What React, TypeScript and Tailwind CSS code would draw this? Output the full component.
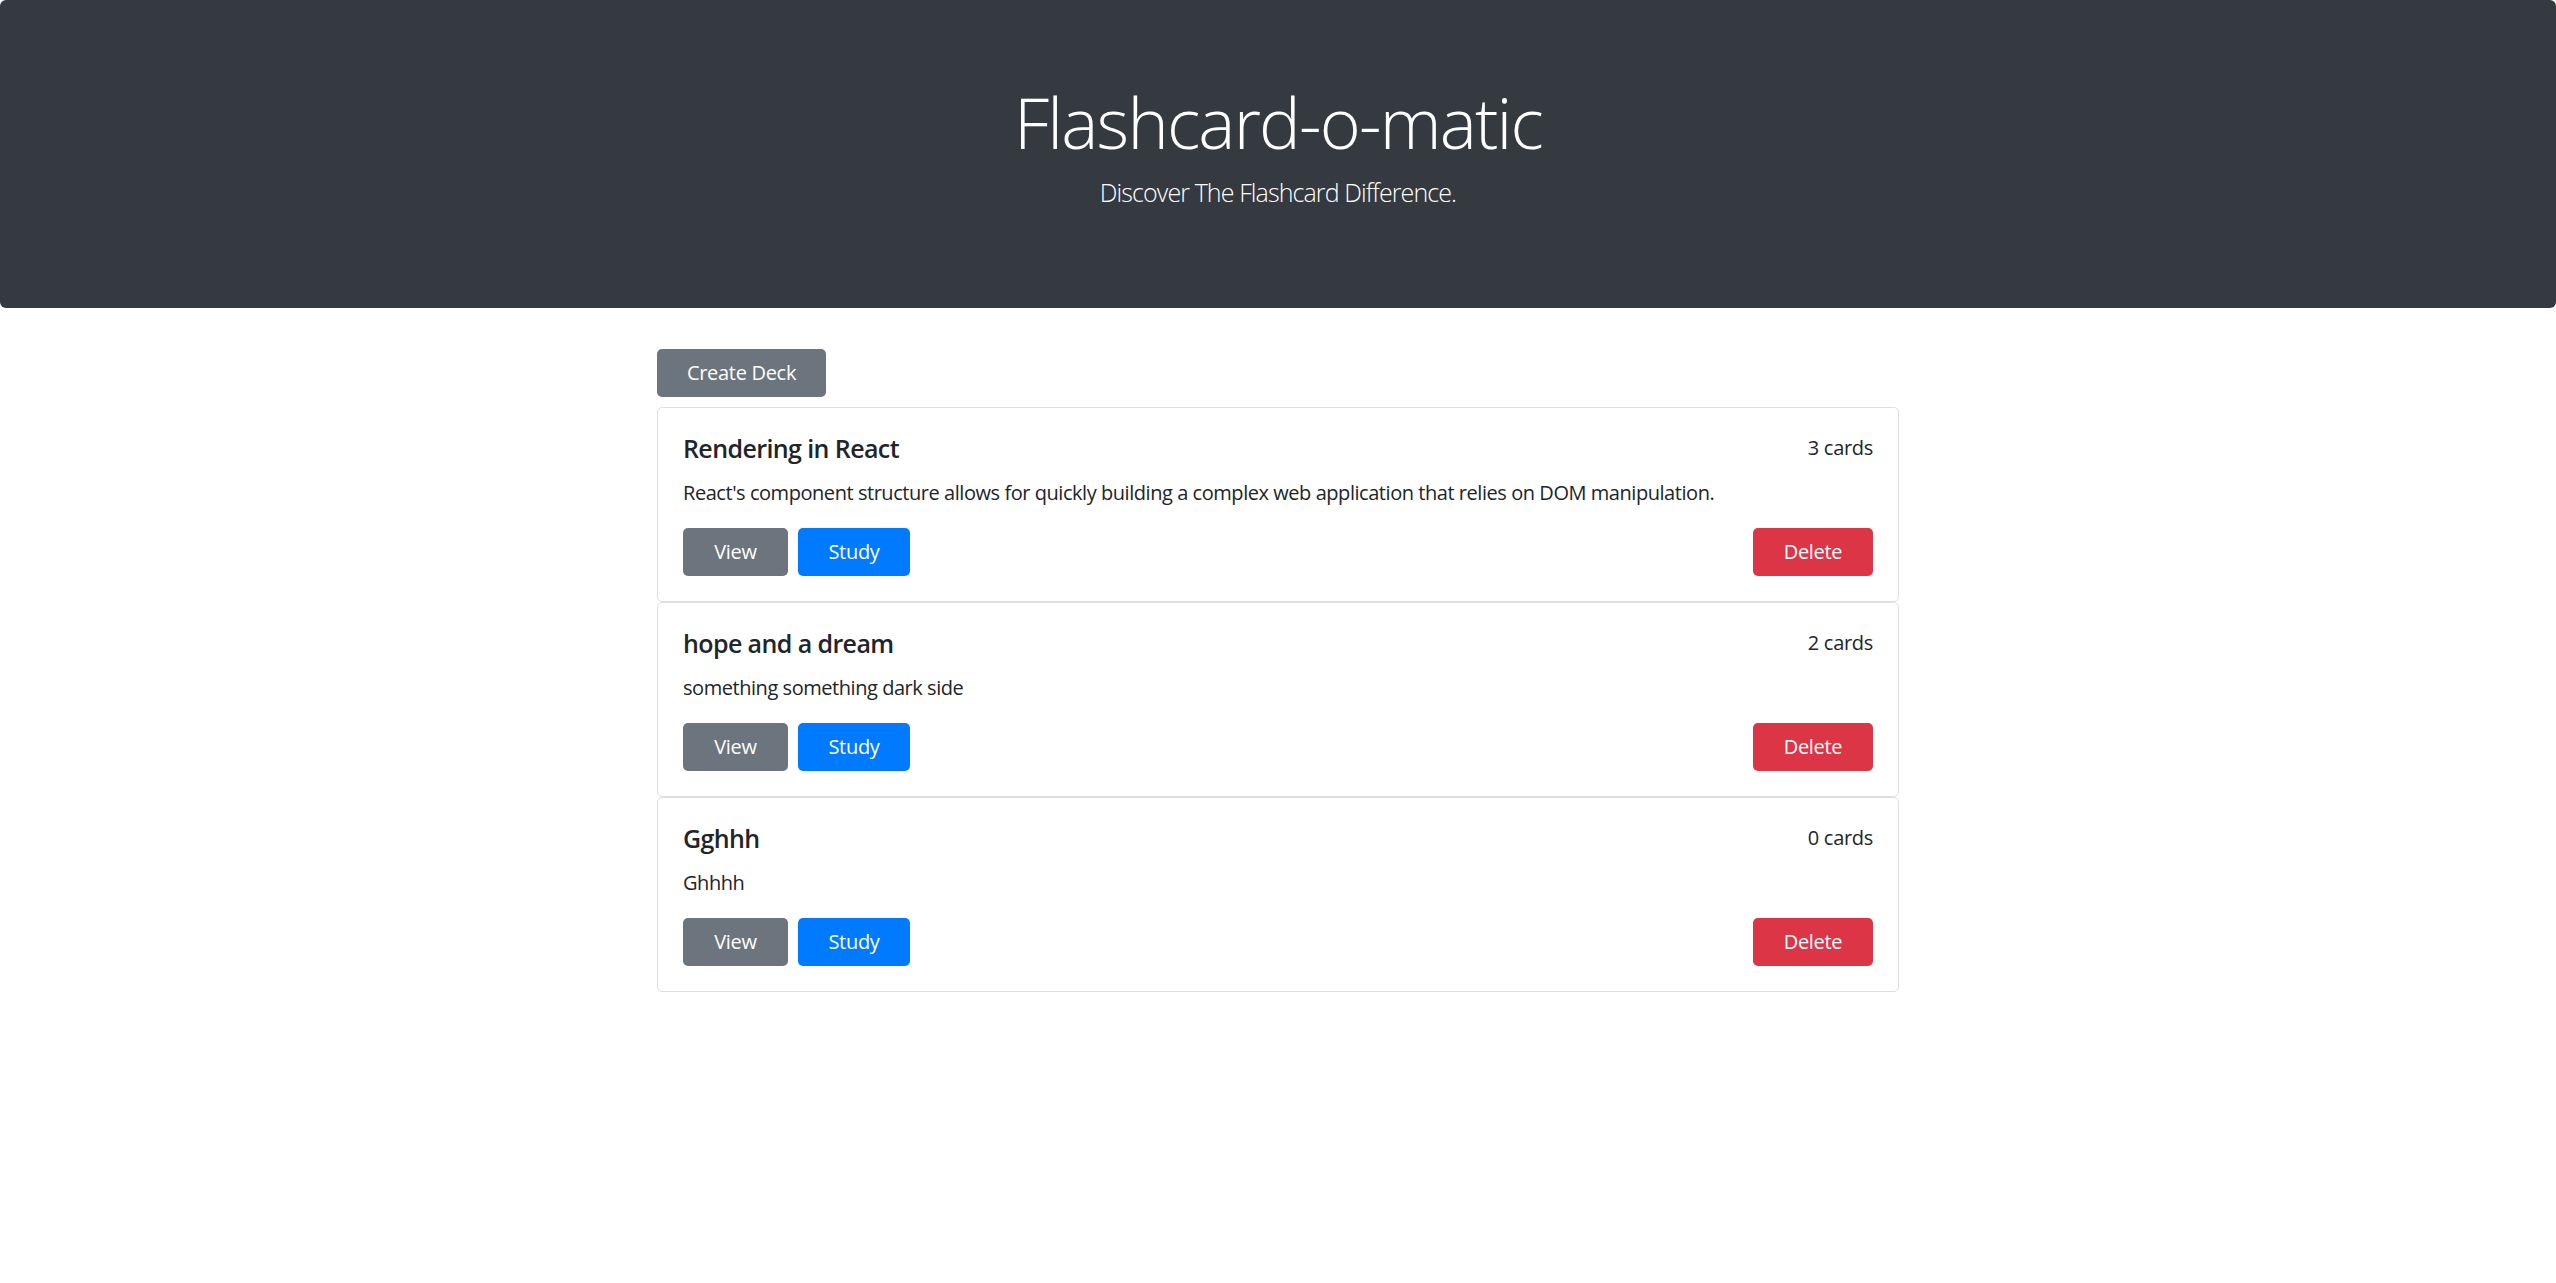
import { useState } from "react";

type Deck = {
	id: number;
	name: string;
	description: string;
	cards: number;
};

const initialDecks: Deck[] = [
	{
		id: 1,
		name: "Rendering in React",
		description:
			"React's component structure allows for quickly building a complex web application that relies on DOM manipulation.",
		cards: 3,
	},
	{ id: 2, name: "hope and a dream", description: "something something dark side", cards: 2 },
	{ id: 3, name: "Gghhh", description: "Ghhhh", cards: 0 },
];

const btn = "h-[48px] rounded-[5px] px-[15px] text-[20px] leading-[30px] tracking-[-0.3px] text-white";

function DeckCard({ deck, onDelete }: { deck: Deck; onDelete: (id: number) => void }) {
	return (
		<div className="rounded-[5px] border border-[#dfdfdf] bg-white p-[25px]">
			<div className="flex items-start justify-between">
				<h5 className="text-[25px] font-semibold leading-[30px] tracking-[-0.6px] text-[#212529]">{deck.name}</h5>
				<span className="text-[20px] leading-[30px] tracking-[-0.3px] text-[#212529]">{deck.cards} cards</span>
			</div>
			<p className="mt-[15px] text-[20px] leading-[30px] tracking-[-0.45px] text-[#212529]">{deck.description}</p>
			<div className="mt-[20px] flex items-center">
				<button type="button" className={`${btn} w-[105px] bg-[#6c757d]`}>
					View
				</button>
				<button type="button" className={`${btn} ml-[10px] w-[112px] bg-[#007bff]`}>
					Study
				</button>
				<button
					type="button"
					onClick={() => onDelete(deck.id)}
					className={`${btn} ml-auto w-[120px] bg-[#dc3545]`}
				>
					Delete
				</button>
			</div>
		</div>
	);
}

export default function App() {
	const [decks, setDecks] = useState<Deck[]>(initialDecks);

	return (
		<div className="min-h-screen bg-white font-['Open_Sans','Noto_Sans',sans-serif] text-[#212529]">
			<header className="flex h-[308px] flex-col items-center rounded-[6px] bg-[#343a40] pt-[80px] text-white">
				<h1 className="text-[70px] font-light leading-[84px] tracking-[-1.8px]">Flashcard-o-matic</h1>
				<p className="mt-[10px] text-[25px] font-light leading-[37px] tracking-[-0.9px]">
					Discover The Flashcard Difference.
				</p>
			</header>

			<main className="mx-auto mt-[41px] w-[1242px]">
				<button type="button" className={`${btn} w-[169px] bg-[#6c757d]`}>
					Create Deck
				</button>
				<div className="mt-[10px] flex flex-col">
					{decks.map((deck) => (
						<DeckCard key={deck.id} deck={deck} onDelete={(id) => setDecks(decks.filter((d) => d.id !== id))} />
					))}
				</div>
			</main>
		</div>
	);
}
